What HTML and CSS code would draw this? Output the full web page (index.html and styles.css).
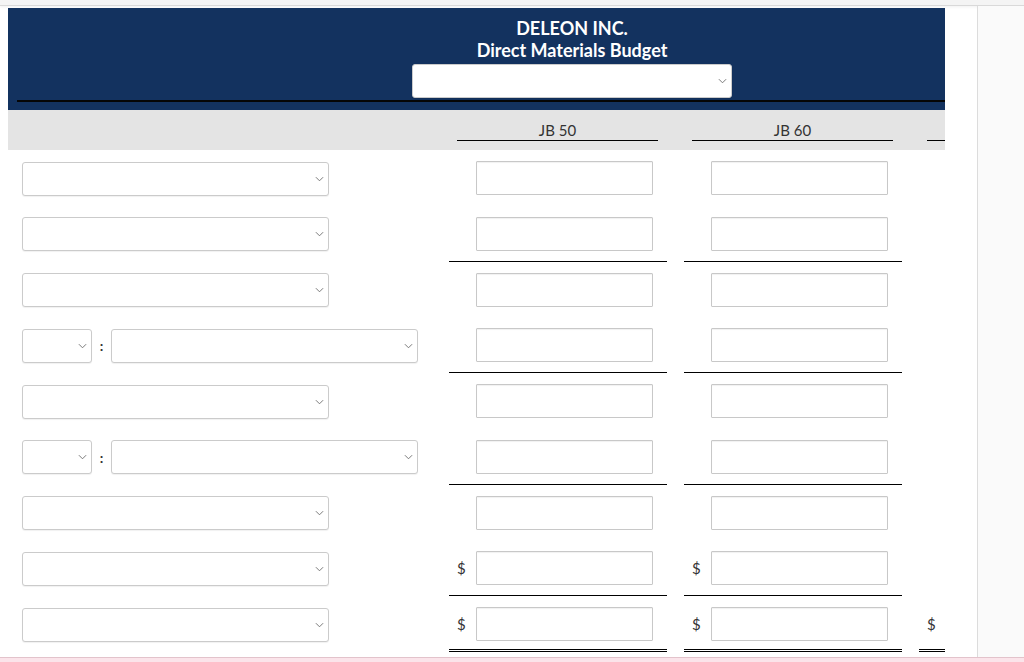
FILE: index.html
```html
<html>
<head>
    <title>Direct Materials Budget</title>
    <link rel="stylesheet" href="styles.css">
</head>

<body>
<div class="topbar"></div>
<div class="layout">
    <div class="main">
        <div class="sheet">
            <div class="banner">
                <div class="banner-title">
                    <div>DELEON INC.</div>
                    <div>Direct Materials Budget</div>
                    <span class="pick pick-head">
                        <select></select>
                        <svg viewBox="0 0 10 6"><path d="M1 1l4 4 4-4" /></svg>
                    </span>
                </div>
                <div class="banner-rule"></div>
            </div>

            <div class="row head-row">
                <div class="label"></div>
                <div class="cell"><div class="colhead">JB 50</div></div>
                <div class="cell"><div class="colhead">JB 60</div></div>
                <div class="cell"><div class="colhead">&nbsp;</div></div>
            </div>

            <div class="row">
                <div class="label">
                    <span class="pick"><select></select><svg viewBox="0 0 10 6"><path d="M1 1l4 4 4-4" /></svg></span>
                </div>
                <div class="cell"><span class="cur"></span><input type="text"></div>
                <div class="cell"><span class="cur"></span><input type="text"></div>
            </div>

            <div class="row">
                <div class="label">
                    <span class="pick"><select></select><svg viewBox="0 0 10 6"><path d="M1 1l4 4 4-4" /></svg></span>
                </div>
                <div class="cell total"><span class="cur"></span><input type="text"></div>
                <div class="cell total"><span class="cur"></span><input type="text"></div>
            </div>

            <div class="row">
                <div class="label">
                    <span class="pick"><select></select><svg viewBox="0 0 10 6"><path d="M1 1l4 4 4-4" /></svg></span>
                </div>
                <div class="cell"><span class="cur"></span><input type="text"></div>
                <div class="cell"><span class="cur"></span><input type="text"></div>
            </div>

            <div class="row">
                <div class="label">
                    <span class="pick pick-small"><select></select><svg viewBox="0 0 10 6"><path d="M1 1l4 4 4-4" /></svg></span>
                    <span class="colon">:</span>
                    <span class="pick"><select></select><svg viewBox="0 0 10 6"><path d="M1 1l4 4 4-4" /></svg></span>
                </div>
                <div class="cell total"><span class="cur"></span><input type="text"></div>
                <div class="cell total"><span class="cur"></span><input type="text"></div>
            </div>

            <div class="row">
                <div class="label">
                    <span class="pick"><select></select><svg viewBox="0 0 10 6"><path d="M1 1l4 4 4-4" /></svg></span>
                </div>
                <div class="cell"><span class="cur"></span><input type="text"></div>
                <div class="cell"><span class="cur"></span><input type="text"></div>
            </div>

            <div class="row">
                <div class="label">
                    <span class="pick pick-small"><select></select><svg viewBox="0 0 10 6"><path d="M1 1l4 4 4-4" /></svg></span>
                    <span class="colon">:</span>
                    <span class="pick"><select></select><svg viewBox="0 0 10 6"><path d="M1 1l4 4 4-4" /></svg></span>
                </div>
                <div class="cell total"><span class="cur"></span><input type="text"></div>
                <div class="cell total"><span class="cur"></span><input type="text"></div>
            </div>

            <div class="row">
                <div class="label">
                    <span class="pick"><select></select><svg viewBox="0 0 10 6"><path d="M1 1l4 4 4-4" /></svg></span>
                </div>
                <div class="cell"><span class="cur"></span><input type="text"></div>
                <div class="cell"><span class="cur"></span><input type="text"></div>
            </div>

            <div class="row">
                <div class="label">
                    <span class="pick"><select></select><svg viewBox="0 0 10 6"><path d="M1 1l4 4 4-4" /></svg></span>
                </div>
                <div class="cell total"><span class="cur">$</span><input type="text"></div>
                <div class="cell total"><span class="cur">$</span><input type="text"></div>
            </div>

            <div class="row">
                <div class="label">
                    <span class="pick"><select></select><svg viewBox="0 0 10 6"><path d="M1 1l4 4 4-4" /></svg></span>
                </div>
                <div class="cell grand"><span class="cur">$</span><input type="text"></div>
                <div class="cell grand"><span class="cur">$</span><input type="text"></div>
                <div class="cell grand"><span class="cur">$</span><input type="text"></div>
            </div>
        </div>
    </div>
    <div class="aside"></div>
</div>
<div class="footbar"></div>
</body>

</html>
```

FILE: styles.css
```css
*{
    margin: 0;
    padding: 0;
    box-sizing: border-box;
}
body{
    height: 662px;
    display: flex;
    flex-direction: column;
    overflow: hidden;
    font-family: Lato, 'Liberation Sans', sans-serif;
    color: #333;
    background: #fff;
}
.topbar{
    height: 6px;
    flex-shrink: 0;
    background: #f4f4f4;
    border-bottom: 1px solid #d9d9d9;
    box-shadow: 0 1px 3px rgba(0, 0, 0, 0.06);
}
.layout{
    flex: 1;
    display: flex;
    overflow: hidden;
}
.main{
    width: 977px;
    flex-shrink: 0;
    padding: 2px 0 0 8px;
}
.aside{
    flex: 1;
    background: #fafafa;
    border-left: 1px solid #dcdcdc;
}
.footbar{
    height: 5px;
    flex-shrink: 0;
    background: #fbe4ea;
    border-top: 1px solid #e3c3cb;
}
.sheet{
    width: 937px;
    overflow: hidden;
}

/* header block */
.banner{
    background: #13325f;
    padding: 9px 0 8px 9px;
}
.banner-title{
    padding-left: 182px;
    text-align: center;
    color: #fff;
    font-weight: bold;
    font-size: 18px;
    line-height: 22px;
}
.banner-title .pick-head{
    display: block;
    width: 320px;
    margin: 3px auto 0;
}
.pick-head svg{
    right: 9px;
}
.banner-rule{
    height: 2px;
    margin-top: 2px;
    background: #050505;
}

/* rows */
.row{
    display: flex;
}
.row > div{
    flex-shrink: 0;
}
.label{
    width: 441px;
    display: flex;
    align-items: center;
    padding: 11px 0 9.75px 14px;
}
.cell{
    width: 218px;
    margin-right: 17px;
    display: flex;
    align-items: center;
    padding: 11px 0 9.75px 8px;
    border-bottom: 1px solid transparent;
}
.cell.total{
    border-bottom-color: #000;
}
.cell.grand{
    border-bottom: 3px double #000;
    padding-bottom: 7.75px;
}
.head-row{
    height: 40px;
    background: #e4e4e4;
}
.head-row .label,
.head-row .cell{
    padding: 11px 0 0 0;
    border: 0;
    align-items: flex-start;
}
.colhead{
    width: 201px;
    margin-left: 8px;
    text-align: center;
    font-size: 15px;
    line-height: 19px;
    border-bottom: 1px solid #000;
}
.cur{
    width: 19px;
    font-size: 15px;
    color: #333;
}
.cell input{
    width: 177px;
    height: 34px;
    border: 1px solid #c8c8c8;
    border-radius: 1px;
    box-shadow: inset 0 1px 1px rgba(0, 0, 0, 0.06);
    outline: 0;
    background: #fff;
}

/* dropdowns */
.pick{
    position: relative;
    display: inline-block;
    width: 307px;
    height: 34px;
}
.pick select{
    width: 100%;
    height: 100%;
    appearance: none;
    -webkit-appearance: none;
    border: 1px solid #cbcbcb;
    border-radius: 3px;
    background: #fff;
    box-shadow: 0 1px 1px rgba(0, 0, 0, 0.06);
    outline: 0;
}
.pick svg{
    position: absolute;
    right: 5px;
    top: 14px;
    width: 9px;
    height: 6px;
    fill: none;
    stroke: #6b6b6b;
    stroke-width: 1;
    pointer-events: none;
}
.pick-small{
    width: 70px;
}
.colon{
    width: 19px;
    text-align: center;
    font-size: 14px;
    font-weight: bold;
    color: #333;
}
```
